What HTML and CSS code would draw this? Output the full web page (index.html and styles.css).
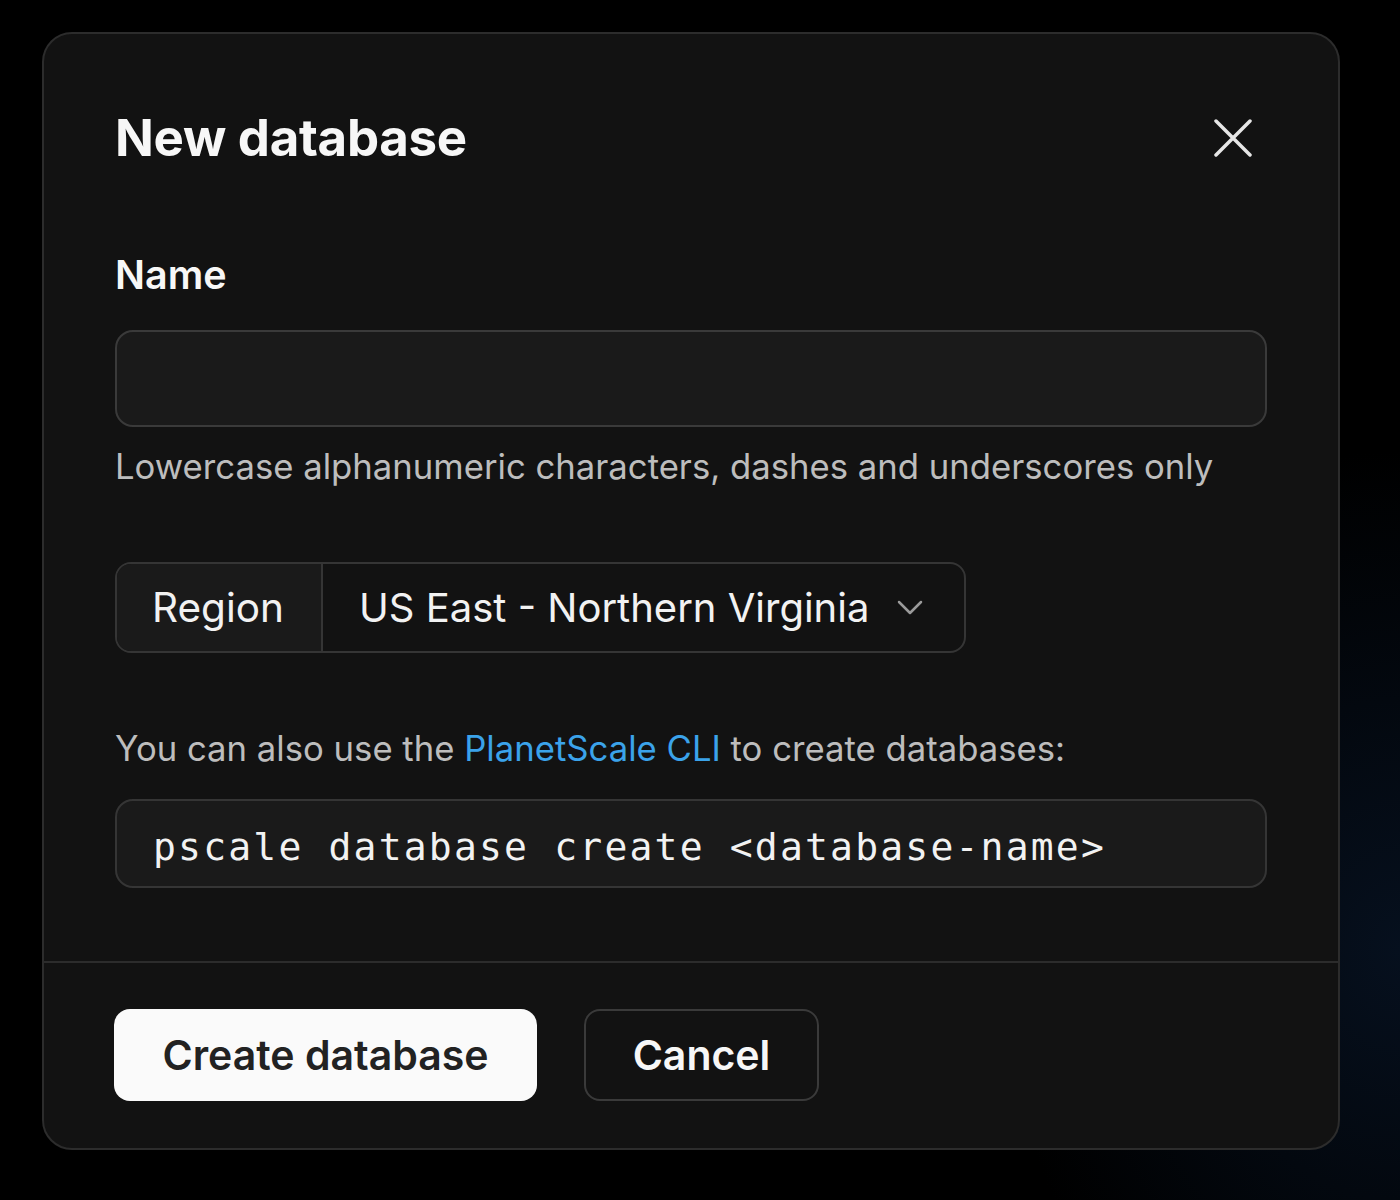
FILE: index.html
```html
<!DOCTYPE html>
<html lang="en">
  <head>
    <meta charset="UTF-8" />
    <meta name="viewport" content="width=device-width, initial-scale=1.0" />
    <title>New database</title>
    <link rel="stylesheet" href="styles.css">
  </head>
  <body>
    <div class="modal">
      <div class="modal-body">
        <div class="modal-header">
          <h2>New database</h2>
          <button class="close-btn" aria-label="Close">
            <svg width="38" height="38" viewBox="0 0 38 38" fill="none" stroke="#e6e6e6" stroke-width="3.5" stroke-linecap="round">
              <path d="M2 2 L36 36 M36 2 L2 36" />
            </svg>
          </button>
        </div>

        <label class="field-label" for="db-name">Name</label>
        <input type="text" id="db-name" class="text-input" />
        <p class="hint">Lowercase alphanumeric characters, dashes and underscores only</p>

        <div class="region-select">
          <span class="region-label">Region</span>
          <span class="region-value">
            US East - Northern Virginia
            <svg width="26" height="15" viewBox="0 0 26 15" fill="none" stroke="#9a9a9a" stroke-width="2.5" stroke-linecap="round" stroke-linejoin="round">
              <path d="M2 2 L13 13 L24 2" />
            </svg>
          </span>
        </div>

        <p class="cli-note">You can also use the <a href="#">PlanetScale CLI</a> to create databases:</p>
        <div class="code-box">pscale database create &lt;database-name&gt;</div>
      </div>

      <div class="modal-footer">
        <button class="btn btn-primary">Create database</button>
        <button class="btn btn-secondary">Cancel</button>
      </div>
    </div>
  </body>
</html>
```

FILE: styles.css
```css
html,
body {
  height: 100%;
}
body {
  margin: 0;
  background: radial-gradient(ellipse 400px 500px at 1400px 950px, #06101e 0%, #000 100%), #000;
  font-family: Inter, "Noto Sans", Roboto, sans-serif;
  color: #f2f2f2;
  padding: 32px 58px 0 42px;
  box-sizing: border-box;
}

.modal {
  width: 1298px;
  height: 1118px;
  box-sizing: border-box;
  background-color: #121212;
  border: 2px solid #2c2c2c;
  border-radius: 30px;
  display: flex;
  flex-direction: column;
}

.modal-body {
  padding: 72px 71px 73px 71px;
  border-bottom: 2px solid #2c2c2c;
}

.modal-header {
  display: flex;
  justify-content: space-between;
  align-items: center;
  margin-bottom: 82px;
}
.modal-header h2 {
  margin: 0;
  font-size: 51px;
  font-weight: 700;
  line-height: 64px;
  letter-spacing: -0.3px;
  color: #f7f7f7;
}
.close-btn {
  background: none;
  border: none;
  padding: 0;
  margin-right: 15px;
  display: flex;
  cursor: pointer;
}

.field-label {
  display: block;
  font-size: 39.5px;
  font-weight: 600;
  line-height: 46px;
  margin-bottom: 32px;
  color: #f7f7f7;
}

.text-input {
  display: block;
  width: 100%;
  height: 97px;
  box-sizing: border-box;
  background-color: #1a1a1a;
  border: 2px solid #3a3a3a;
  border-radius: 18px;
  outline: none;
}

.hint,
.cli-note {
  margin: 0;
  font-size: 34.7px;
  line-height: 46px;
  color: #bdbdbd;
}
.hint {
  margin-top: 16px;
  margin-bottom: 73px;
}

.region-select {
  display: flex;
  width: 851px;
  height: 91px;
  box-sizing: border-box;
  border: 2px solid #353535;
  border-radius: 16px;
  overflow: hidden;
  margin-bottom: 72px;
}
.region-label {
  display: flex;
  align-items: center;
  padding: 0 35px;
  width: 206px;
  box-sizing: border-box;
  background-color: #1a1a1a;
  border-right: 2px solid #353535;
  font-size: 40.5px;
}
.region-value {
  flex-grow: 1;
  display: flex;
  align-items: center;
  gap: 28px;
  padding-left: 36px;
  font-size: 40px;
}

.cli-note {
  margin-bottom: 28px;
}
.cli-note a {
  color: #3ba3ea;
  text-decoration: none;
}

.code-box {
  height: 89px;
  box-sizing: border-box;
  display: flex;
  align-items: center;
  padding: 6px 0 0 36px;
  background-color: #1a1a1a;
  border: 2px solid #353535;
  border-radius: 18px;
  font-family: "DejaVu Sans Mono", "Liberation Mono", monospace;
  font-size: 38px;
  letter-spacing: 2.2px;
  color: #f2f2f2;
}

.modal-footer {
  display: flex;
  gap: 47px;
  padding: 46px 71px 0 70px;
}
.btn {
  height: 92px;
  font-family: inherit;
  font-size: 41px;
  font-weight: 600;
  border-radius: 16px;
  cursor: pointer;
}
.btn-primary {
  width: 423px;
  background-color: #fafafa;
  color: #222;
  border: none;
}
.btn-secondary {
  width: 235px;
  background-color: #121212;
  color: #f7f7f7;
  border: 2px solid #3a3a3a;
}
```
